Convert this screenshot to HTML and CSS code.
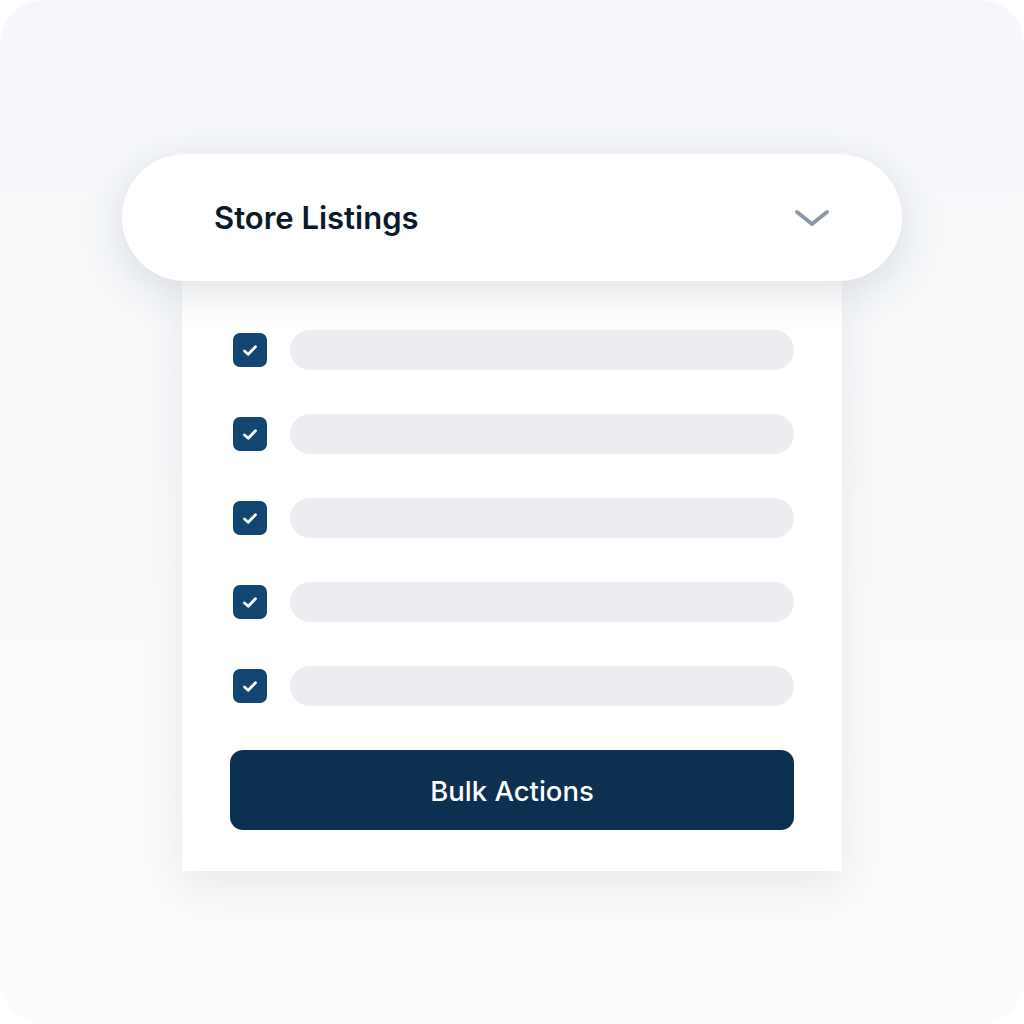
FILE: index.html
```html
<!DOCTYPE html>
<html lang="en">
<head>
    <meta charset="UTF-8">
    <meta name="viewport" content="width=device-width, initial-scale=1.0">
    <title>Store Listings</title>
    <link rel="stylesheet" href="styles.css">
</head>
<body>
    <div class="frame">
        <div class="dropdown">
            <div class="dropdown-head">
                <span class="dropdown-title">Store Listings</span>
                <svg class="chevron" width="36" height="20" viewBox="0 0 36 20">
                    <path d="M3 4 L18 16 L33 4" fill="none" stroke="#8e9aa8" stroke-width="4" stroke-linecap="round" stroke-linejoin="round"/>
                </svg>
            </div>
            <div class="dropdown-body">
                <div class="row">
                    <span class="check"><svg width="16" height="13" viewBox="0 0 16 13"><path d="M2.5 7 L6.2 10.3 L13.5 2.8" fill="none" stroke="#fff" stroke-width="2.8" stroke-linecap="round" stroke-linejoin="round"/></svg></span>
                    <span class="bar"></span>
                </div>
                <div class="row">
                    <span class="check"><svg width="16" height="13" viewBox="0 0 16 13"><path d="M2.5 7 L6.2 10.3 L13.5 2.8" fill="none" stroke="#fff" stroke-width="2.8" stroke-linecap="round" stroke-linejoin="round"/></svg></span>
                    <span class="bar"></span>
                </div>
                <div class="row">
                    <span class="check"><svg width="16" height="13" viewBox="0 0 16 13"><path d="M2.5 7 L6.2 10.3 L13.5 2.8" fill="none" stroke="#fff" stroke-width="2.8" stroke-linecap="round" stroke-linejoin="round"/></svg></span>
                    <span class="bar"></span>
                </div>
                <div class="row">
                    <span class="check"><svg width="16" height="13" viewBox="0 0 16 13"><path d="M2.5 7 L6.2 10.3 L13.5 2.8" fill="none" stroke="#fff" stroke-width="2.8" stroke-linecap="round" stroke-linejoin="round"/></svg></span>
                    <span class="bar"></span>
                </div>
                <div class="row">
                    <span class="check"><svg width="16" height="13" viewBox="0 0 16 13"><path d="M2.5 7 L6.2 10.3 L13.5 2.8" fill="none" stroke="#fff" stroke-width="2.8" stroke-linecap="round" stroke-linejoin="round"/></svg></span>
                    <span class="bar"></span>
                </div>
                <button class="bulk-btn">Bulk Actions</button>
            </div>
        </div>
    </div>
</body>
</html>
```

FILE: styles.css
```css
body {
    margin: 0;
    padding: 0;
    background-color: #fff;
    font-family: Inter, "Open Sans", sans-serif;
}

.frame {
    width: 1024px;
    height: 1024px;
    box-sizing: border-box;
    border-radius: 44px;
    background: linear-gradient(180deg, #f5f7fa 0%, #f9fafb 55%, #fbfbfb 100%);
    padding-top: 154px;
    overflow: hidden;
}

.dropdown {
    display: flex;
    flex-direction: column;
    align-items: center;
}

.dropdown-head {
    width: 780px;
    height: 127px;
    box-sizing: border-box;
    border-radius: 64px;
    background-color: #fff;
    box-shadow: 0 10px 44px rgba(40, 52, 72, 0.15);
    display: flex;
    align-items: center;
    justify-content: space-between;
    padding: 0 72px 0 92px;
    position: relative;
    z-index: 1;
}

.dropdown-title {
    font-size: 31px;
    font-weight: 600;
    color: #0b1a2a;
    letter-spacing: 0;
}

.chevron {
    display: block;
}

/* Panel with the checked listings */
.dropdown-body {
    width: 660px;
    box-sizing: border-box;
    background-color: #fff;
    box-shadow: 0 14px 40px rgba(40, 52, 72, 0.09);
    padding: 49px 48px 41px 48px;
    display: flex;
    flex-direction: column;
    gap: 44px;
}

.row {
    display: flex;
    align-items: center;
    gap: 23px;
    height: 40px;
}

.check {
    width: 34px;
    height: 34px;
    margin-left: 3px;
    border-radius: 7px;
    background-color: #134571;
    display: flex;
    align-items: center;
    justify-content: center;
    flex-shrink: 0;
}

.check svg {
    display: block;
}

.bar {
    flex-grow: 1;
    height: 40px;
    border-radius: 20px;
    background-color: #ecedf0;
}

.bulk-btn {
    height: 80px;
    border: none;
    border-radius: 13px;
    background-color: #0d3050;
    color: #fff;
    font-family: Inter, "Open Sans", sans-serif;
    font-size: 27.5px;
    font-weight: 500;
    letter-spacing: 0;
    padding-top: 3px;
    cursor: pointer;
}
```
